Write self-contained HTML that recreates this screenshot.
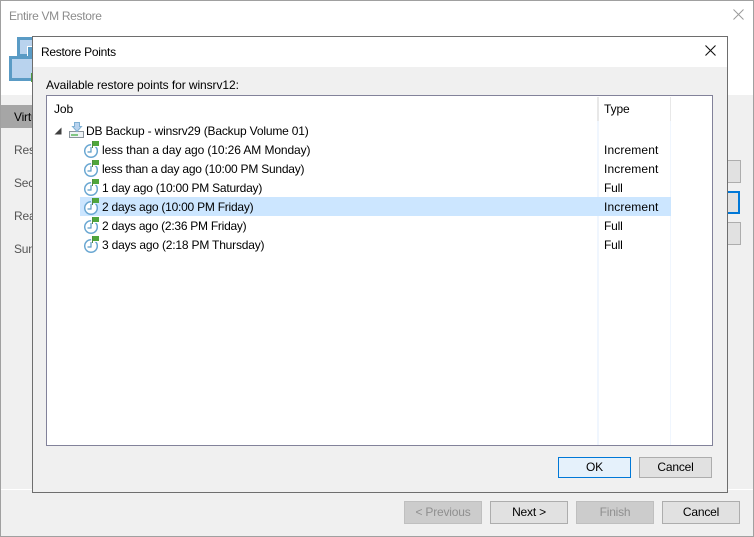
<!DOCTYPE html>
<html><head><meta charset="utf-8"><style>
html,body{margin:0;padding:0;width:754px;height:537px;overflow:hidden;background:#fff}
*{box-sizing:border-box}
body{font-family:"Liberation Sans",sans-serif;font-size:12px;color:#000;position:relative}
.a{position:absolute}
.t{position:absolute;white-space:nowrap;line-height:16px;letter-spacing:-.2px}
.n{letter-spacing:.12px}
.b{position:absolute;background:#e1e1e1;border:1px solid #adadad;text-align:center;line-height:21px;white-space:nowrap;letter-spacing:-.2px}
.d{background:#cccccc;border-color:#bfbfbf;color:#8f8f8f}
.ic{position:absolute;left:84px;width:18px;height:18px}
</style></head><body>
<div class="a" style="left:0;top:0;width:754px;height:537px;border:1px solid #a0a0a0"></div>
<div class="t" style="left:9px;top:8px;color:#8c8c8c;letter-spacing:-.32px">Entire VM Restore</div>
<svg class="a" style="left:732px;top:8px" width="14" height="14"><path d="M1.500 1.500L11.500 11.500M11.500 1.500L1.500 11.500" stroke="#9a9a9a" fill="none"/></svg>
<div class="a" style="left:1px;top:95px;width:752px;height:441px;background:#f0f0f0"></div>
<div class="a" style="left:1px;top:489px;width:752px;height:1px;background:#fff"></div>
<div class="a" style="left:17px;top:37px;width:16px;height:20px;background:#b9d3ee;border:3px solid #5a9bc5;border-right:0"></div>
<div class="a" style="left:27px;top:46px;width:6px;height:10px;background:#5a9bc5;border-left:1px solid #fff;border-top:1px solid #fff"></div>
<div class="a" style="left:9px;top:56px;width:24px;height:25px;background:#b9d3ee;border:3px solid #5a9bc5;border-right:0"></div>
<div class="a" style="left:31px;top:73px;width:2px;height:9px;background:#4f9a3c"></div>
<div class="a" style="left:1px;top:105px;width:32px;height:23px;background:#a6a6a6"></div>
<div class="t" style="left:14px;top:109px;width:18px;overflow:hidden">Virtual</div>
<div class="t" style="left:14px;top:142px;width:18px;overflow:hidden;color:#555">Restore</div>
<div class="t" style="left:14px;top:175px;width:18px;overflow:hidden;color:#555">Secure</div>
<div class="t" style="left:14px;top:208px;width:18px;overflow:hidden;color:#555">Reason</div>
<div class="t" style="left:14px;top:241px;width:19px;overflow:hidden;color:#555">Summary</div>
<div class="a" style="left:700px;top:160px;width:41px;height:23px;background:#e1e1e1;border:1px solid #adadad"></div>
<div class="a" style="left:700px;top:191px;width:40px;height:23px;background:#e1e1e1;border:2px solid #0078d7"></div>
<div class="a" style="left:700px;top:222px;width:41px;height:23px;background:#e1e1e1;border:1px solid #adadad"></div>
<div class="b d" style="left:404px;top:501px;width:78px;height:23px">&lt; Previous</div>
<div class="b" style="left:490px;top:501px;width:78px;height:23px">Next &gt;</div>
<div class="b d" style="left:576px;top:501px;width:78px;height:23px">Finish</div>
<div class="b" style="left:662px;top:501px;width:78px;height:23px">Cancel</div>

<div class="a" style="left:32px;top:36px;width:696px;height:457px;background:#f0f0f0;border:1px solid #6e6e6e"></div>
<div class="a" style="left:33px;top:37px;width:694px;height:30px;background:#fff"></div>
<div class="t" style="left:41px;top:44px;letter-spacing:-.28px">Restore Points</div>
<svg class="a" style="left:704px;top:44px" width="14" height="14"><path d="M1.500 1.500L11.500 11.500M11.500 1.500L1.500 11.500" stroke="#111" stroke-width="1.100" fill="none"/></svg>
<div class="t" style="left:46px;top:77px;letter-spacing:-.08px">Available restore points for winsrv12:</div>
<div class="a" style="left:46px;top:95px;width:667px;height:351px;background:#fff;border:1px solid #82829a"></div>
<div class="a" style="left:597px;top:97px;width:2px;height:24px;background:#e8e8e8"></div>
<div class="a" style="left:670px;top:97px;width:1px;height:24px;background:#e8e8e8"></div>
<div class="a" style="left:597px;top:121px;width:2px;height:324px;background:#f0f6fe"></div>
<div class="a" style="left:670px;top:121px;width:1px;height:324px;background:#f0f6fe"></div>
<div class="a" style="left:80px;top:197px;width:591px;height:19px;background:#cce6ff"></div>
<div class="t" style="left:54px;top:101px;letter-spacing:-.1px">Job</div>
<div class="t" style="left:604px;top:101px;letter-spacing:-.1px">Type</div>
<svg class="a" style="left:54px;top:127px" width="8" height="8"><path d="M0.500 7.500L7.500 0.500V7.500Z" fill="#404040"/></svg>
<svg class="a" style="left:68px;top:122px" width="17" height="17"><path d="M1.500 9.500H15.500V15.500H1.500Z" fill="#eef2f5" stroke="#8a949c"/><path d="M3 13H10" stroke="#5cb85c" stroke-width="1.500"/><path d="M6.500 .5H11.500V4.500H13.500L9 9.500L4.500 4.500H6.500Z" fill="#b9d3ee" stroke="#7fb0d3"/></svg>
<div class="t" style="left:86px;top:123px;letter-spacing:-.175px">DB Backup - winsrv29 (Backup Volume 01)</div>

<svg class="ic" style="top:141px" viewBox="0 0 18 18"><circle cx="7" cy="10" r="6.300" fill="#fff" stroke="#6aa7d2" stroke-width="1.500"/><path d="M7 6V11H3.500" fill="none" stroke="#5a9bc5" stroke-width="1.200"/><path d="M7 0H16V6H7Z" fill="#fff" opacity=".9"/><path d="M8 0H15V5H8Z" fill="#4fa63c"/><path d="M8.500 0V7" stroke="#4f8a42"/></svg>
<div class="t" style="left:102px;top:142px;letter-spacing:-.1px">less than a day ago (10:26 AM Monday)</div>
<div class="t n" style="left:604px;top:142px">Increment</div>
<svg class="ic" style="top:160px" viewBox="0 0 18 18"><circle cx="7" cy="10" r="6.300" fill="#fff" stroke="#6aa7d2" stroke-width="1.500"/><path d="M7 6V11H3.500" fill="none" stroke="#5a9bc5" stroke-width="1.200"/><path d="M7 0H16V6H7Z" fill="#fff" opacity=".9"/><path d="M8 0H15V5H8Z" fill="#4fa63c"/><path d="M8.500 0V7" stroke="#4f8a42"/></svg>
<div class="t" style="left:102px;top:161px;letter-spacing:-.23px">less than a day ago (10:00 PM Sunday)</div>
<div class="t n" style="left:604px;top:161px">Increment</div>
<svg class="ic" style="top:179px" viewBox="0 0 18 18"><circle cx="7" cy="10" r="6.300" fill="#fff" stroke="#6aa7d2" stroke-width="1.500"/><path d="M7 6V11H3.500" fill="none" stroke="#5a9bc5" stroke-width="1.200"/><path d="M7 0H16V6H7Z" fill="#fff" opacity=".9"/><path d="M8 0H15V5H8Z" fill="#4fa63c"/><path d="M8.500 0V7" stroke="#4f8a42"/></svg>
<div class="t" style="left:102px;top:180px;letter-spacing:-.23px">1 day ago (10:00 PM Saturday)</div>
<div class="t" style="left:604px;top:180px">Full</div>
<svg class="ic" style="top:198px" viewBox="0 0 18 18"><circle cx="7" cy="10" r="6.300" fill="#fff" stroke="#6aa7d2" stroke-width="1.500"/><path d="M7 6V11H3.500" fill="none" stroke="#5a9bc5" stroke-width="1.200"/><path d="M7 0H16V6H7Z" fill="#cce6ff"/><path d="M8 0H15V5H8Z" fill="#4fa63c"/><path d="M8.500 0V7" stroke="#4f8a42"/></svg>
<div class="t" style="left:102px;top:199px;letter-spacing:-.24px">2 days ago (10:00 PM Friday)</div>
<div class="t n" style="left:604px;top:199px">Increment</div>
<svg class="ic" style="top:217px" viewBox="0 0 18 18"><circle cx="7" cy="10" r="6.300" fill="#fff" stroke="#6aa7d2" stroke-width="1.500"/><path d="M7 6V11H3.500" fill="none" stroke="#5a9bc5" stroke-width="1.200"/><path d="M7 0H16V6H7Z" fill="#fff" opacity=".9"/><path d="M8 0H15V5H8Z" fill="#4fa63c"/><path d="M8.500 0V7" stroke="#4f8a42"/></svg>
<div class="t" style="left:102px;top:218px;letter-spacing:-.26px">2 days ago (2:36 PM Friday)</div>
<div class="t" style="left:604px;top:218px">Full</div>
<svg class="ic" style="top:236px" viewBox="0 0 18 18"><circle cx="7" cy="10" r="6.300" fill="#fff" stroke="#6aa7d2" stroke-width="1.500"/><path d="M7 6V11H3.500" fill="none" stroke="#5a9bc5" stroke-width="1.200"/><path d="M7 0H16V6H7Z" fill="#fff" opacity=".9"/><path d="M8 0H15V5H8Z" fill="#4fa63c"/><path d="M8.500 0V7" stroke="#4f8a42"/></svg>
<div class="t" style="left:102px;top:237px;letter-spacing:-.19px">3 days ago (2:18 PM Thursday)</div>
<div class="t" style="left:604px;top:237px">Full</div>
<div class="b" style="left:558px;top:457px;width:73px;height:21px;line-height:19px;background:#e5f1fb;border-color:#0078d7">OK</div>
<div class="b" style="left:639px;top:457px;width:73px;height:21px;line-height:19px">Cancel</div>
</body></html>
